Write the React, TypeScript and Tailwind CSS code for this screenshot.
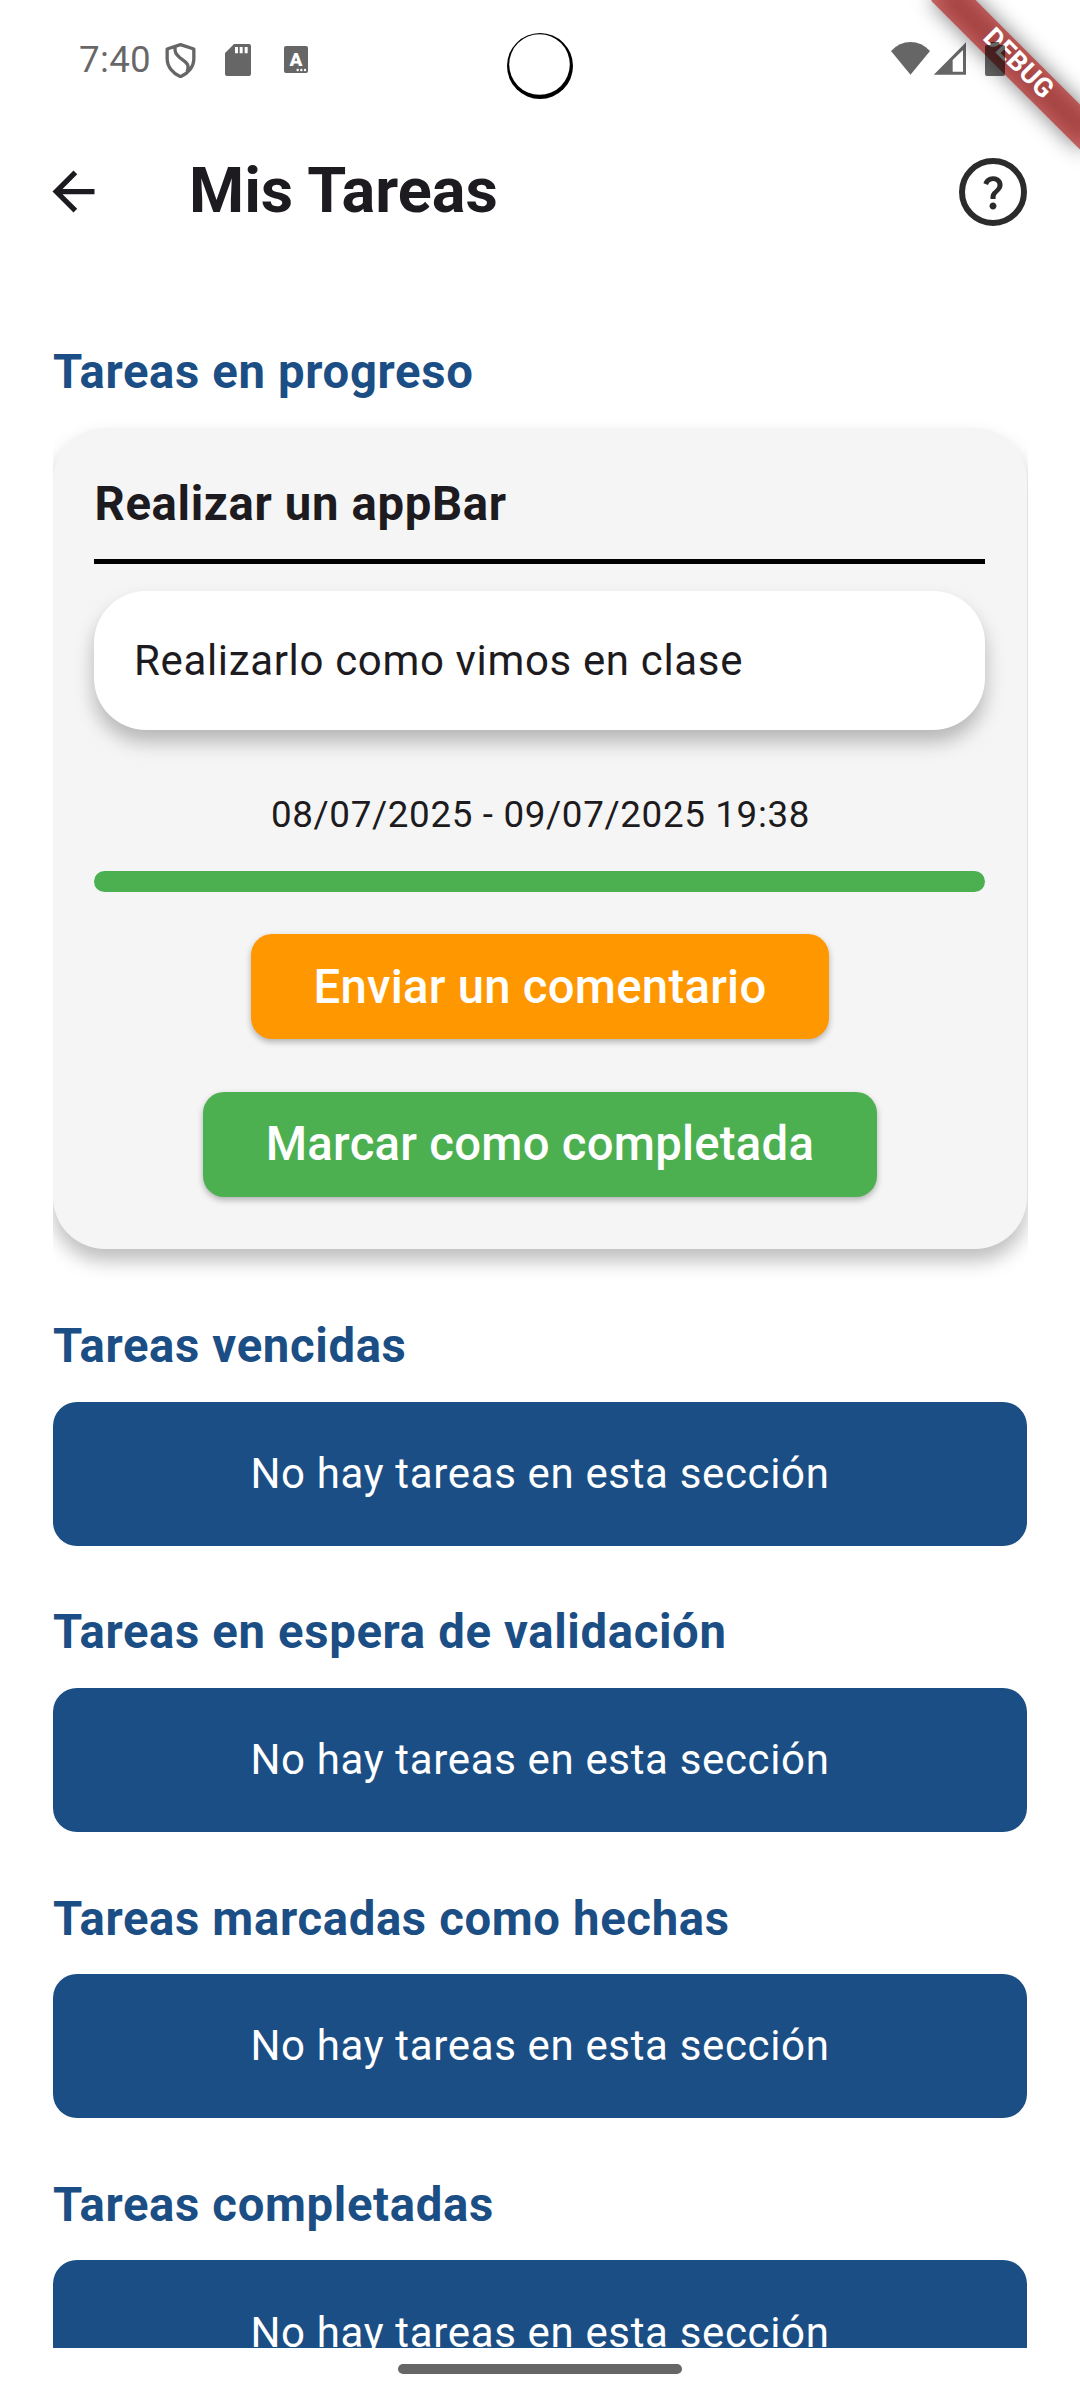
const emptySections = [
  'Tareas vencidas',
  'Tareas en espera de validación',
  'Tareas marcadas como hechas',
  'Tareas completadas',
];

const elevation = 'shadow-[0_12px_19px_rgba(0,0,0,0.26)]';
const buttonElevation = 'shadow-[0_3px_6px_rgba(0,0,0,0.28)]';

function StatusBar() {
  return (
    <div className="flex h-[136px] items-start text-black/60">
      <span className="ml-[79px] mt-[37px] h-[44px] w-[87px] text-[36.75px] leading-[45px] tracking-[0.3px]">7:40</span>
      <svg className="-ml-px mt-[42px] h-9 w-[31px]" viewBox="15 18 92 108" fill="none" stroke="currentColor" strokeWidth="10" strokeLinejoin="round">
        <path d="M61 26 L101 39 V68 C101 92 84 112 61 122 C38 112 21 92 21 68 V39 Z M45 33 C43 48 47 55 60 66 C76 78 90 84 81 106" />
      </svg>
      <svg className="ml-[29px] mt-[44px] h-8 w-[26px]" viewBox="195 24 78 96" fill="currentColor">
        <path fillRule="evenodd" d="M222 24 H267 Q273 24 273 30 V114 Q273 120 267 120 H201 Q195 120 195 114 V51 Z M225 33 V52 H234 V33 Z M239 33 V52 H248 V33 Z M254 33 V52 H263 V33 Z" />
      </svg>
      <svg className="ml-[33px] mt-[46px] h-[27px] w-6" viewBox="372 30 72 81">
        <rect x="372" y="30" width="72" height="81" rx="6" fill="currentColor" />
        <text x="408" y="90" textAnchor="middle" className="fill-white font-[Roboto] text-[57px] font-black">A</text>
        <circle cx="413" cy="102" r="3.6" fill="white" />
        <circle cx="424" cy="102" r="3.6" fill="white" />
        <circle cx="435" cy="102" r="3.6" fill="white" />
      </svg>
      <svg className="ml-auto mt-[42px] h-[33px] w-[39px]" viewBox="213 126 117 99" fill="currentColor">
        <path d="M271.5 224 L213 153 Q238 126 271.5 126 Q305 126 330 153 Z" />
      </svg>
      <svg className="ml-1 mt-[42px] h-[33px] w-8" viewBox="342 126 96 99" fill="currentColor">
        <path fillRule="evenodd" d="M341 224.500 L438 127 V224.500 Z M398 180 V215 H429 V150 Z" />
      </svg>
      <svg className="relative z-20 ml-[19px] mr-[75px] mt-[42px] h-[34px] w-5" viewBox="0 0 20 34" fill="currentColor">
        <path d="M2 3 H5.500 V1 Q5.500 0 6.500 0 H13.500 Q14.500 0 14.500 1 V3 H18 Q20 3 20 5 V32 Q20 34 18 34 H2 Q0 34 0 32 V5 Q0 3 2 3 Z" />
      </svg>
      <svg className="absolute left-[507px] top-[33px] size-[66px]" viewBox="0 0 66 66">
        <circle cx="33" cy="33" r="33" fill="black" />
        <circle cx="32.500" cy="31.500" r="30.300" fill="white" />
      </svg>
    </div>
  );
}

function DebugBanner() {
  return (
    <div className="pointer-events-none absolute right-0 top-0 z-10 size-[240px] overflow-hidden">
      <div className="absolute left-[135px] top-[73.5px] h-[31.5px] w-[210px] origin-[105px_-73.5px] rotate-45">
        <div className="absolute inset-0 bg-black/50 blur-[10.4px]" />
        <div className="absolute inset-0 flex items-center justify-center bg-[#b71c1c]/63 pb-[2px] pl-[2px] text-[26.775px] font-bold leading-none tracking-[0.3px] text-white">
          DEBUG
        </div>
      </div>
    </div>
  );
}

function AppBar() {
  return (
    <header className="flex h-[111px] items-center">
      <svg className="mb-px ml-[42px] size-[63px]" viewBox="0 0 24 24" fill="#1d1b20">
        <path d="M20 11H7.830l5.590-5.590L12 4l-8 8 8 8 1.410-1.410L7.830 13H20v-2z" />
      </svg>
      <h1 className="mb-[2px] ml-[84px] text-[63px] font-bold leading-[72px] text-[#1d1b20]">Mis Tareas</h1>
      <div className="ml-auto mr-[53px] flex size-[68px] items-center justify-center rounded-full border-[6px] border-[#2b2b2b]">
        <svg className="size-[42px] shrink-0" viewBox="0 0 24 24" fill="#2b2b2b">
          <path d="M11.070 12.850c.770-1.390 2.250-2.210 3.110-3.440.910-1.290.400-3.700-2.180-3.700-1.690 0-2.520 1.280-2.870 2.340L6.540 6.960C7.250 4.830 9.180 3 11.990 3c2.350 0 3.960 1.070 4.780 2.410.700 1.150 1.110 3.300.030 4.900-1.200 1.770-2.350 2.310-2.970 3.450-.250.460-.350.760-.350 2.240h-2.890c-.010-.780-.130-2.050.480-3.150zM14 20c0 1.100-.900 2-2 2s-2-.900-2-2c0-1.100.900-2 2-2s2 .900 2 2z" />
        </svg>
      </div>
    </header>
  );
}

function SectionHeading({ children }: { children: string }) {
  return (
    <h2 className="mb-[27.64px] pt-[0.36px] text-[47.25px] font-bold leading-[56px] tracking-[0.656px] text-[#1b4e84]">
      {children}
    </h2>
  );
}

function TaskCard() {
  return (
    <article className={`mr-px flex h-[821px] flex-col items-center rounded-[52px] bg-[#f5f5f5] pl-[41px] pr-[42px] pt-12 text-[#1d1b20] ${elevation}`}>
      <h3 className="h-[88px] w-full border-b-[5px] border-black pl-[0.5px] text-[47.25px] font-bold leading-[56px] tracking-[0.656px]">
        Realizar un appBar
      </h3>
      <p className={`mt-[27px] h-[139px] w-full rounded-[52px] bg-white pl-[40px] text-[42px] leading-[139px] tracking-[0.656px] ${elevation}`}>
        Realizarlo como vimos en clase
      </p>
      <p className="mt-[63px] pl-[2px] text-[36.75px] leading-[44px] tracking-[0.656px]">08/07/2025 - 09/07/2025 19:38</p>
      <div className="mt-[34px] h-[21px] w-full rounded-full bg-[#4caf50]" />
      <button className={`mt-[42px] h-[105px] w-[578px] rounded-[21px] bg-[#ff9800] pl-px pt-px text-[47.25px] font-medium tracking-[0.2625px] text-white ${buttonElevation}`}>
        Enviar un comentario
      </button>
      <button className={`mt-[53px] h-[105px] w-[674px] rounded-[21px] bg-[#4caf50] pl-px text-[47.25px] font-medium tracking-[0.2625px] text-white ${buttonElevation}`}>
        Marcar como completada
      </button>
    </article>
  );
}

export default function App() {
  return (
    <div className="relative flex h-[2400px] w-[1080px] flex-col overflow-hidden bg-white font-[Roboto,sans-serif]">
      <StatusBar />
      <DebugBanner />
      <AppBar />
      <main className="ml-[53px] mr-[52px] h-[2101px] overflow-hidden pt-[97px]">
        <section className="mb-[69px]">
          <SectionHeading>Tareas en progreso</SectionHeading>
          <TaskCard />
        </section>
        {emptySections.map((title) => (
          <section key={title} className="mb-[58.1px]">
            <SectionHeading>{title}</SectionHeading>
            <p className="mr-px h-[144px] rounded-[24px] bg-[#1b4e84] pt-[0.36px] text-center text-[42px] leading-[144px] tracking-[0.656px] text-white">
              No hay tareas en esta sección
            </p>
          </section>
        ))}
      </main>
      <div className="mx-auto mt-4 h-[10px] w-[284px] rounded-full bg-[#666]" />
    </div>
  );
}
